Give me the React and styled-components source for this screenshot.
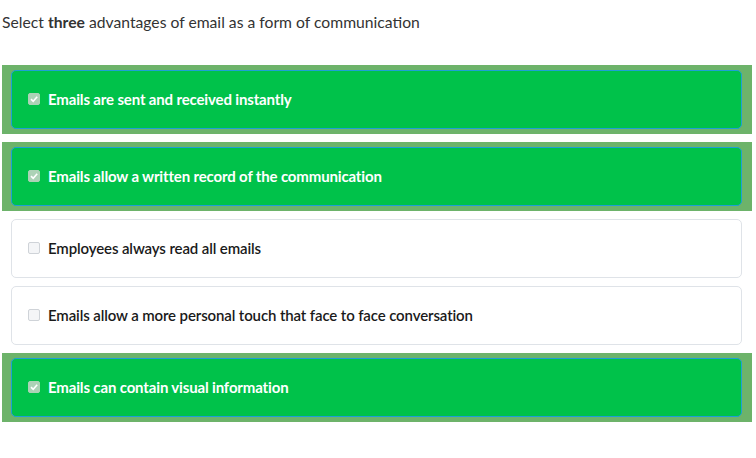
import React from "react";
import styled, { createGlobalStyle } from "styled-components";

const Global = createGlobalStyle`
  html, body { margin: 0; padding: 0; background: #ffffff; }
  body { font-family: Lato, "Open Sans", sans-serif; }
`;

const Page = styled.div`
  width: 756px;
  padding: 12px 4px 0 2px;
  box-sizing: border-box;
`;

const Question = styled.p`
  margin: 0 0 33px 0;
  font-size: 15.7px;
  line-height: 20px;
  color: #333333;
  b { font-weight: 700; color: #333333; }
`;

const List = styled.div`
  display: flex;
  flex-direction: column;
  gap: 8px;
`;

const Wrap = styled.div`
  padding: ${(p) => (p.$selected ? "5px 10px 5px 9px" : "0 10px 0 9px")};
  background: ${(p) => (p.$selected ? "#6db36a" : "transparent")};
`;

const Option = styled.label`
  display: flex;
  align-items: center;
  gap: 9px;
  height: 59px;
  box-sizing: border-box;
  padding: 0 0 0 16px;
  border-radius: 5px;
  border: 1px solid ${(p) => (p.$selected ? "#1e9fd6" : "#dfe3e8")};
  background: ${(p) => (p.$selected ? "#00c24a" : "#ffffff")};
  color: ${(p) => (p.$selected ? "#ffffff" : "#1a1a1a")};
  font-size: 15px;
  font-weight: ${(p) => (p.$selected ? 700 : 600)};
  letter-spacing: ${(p) => (p.$selected ? "-0.15px" : "-0.12px")};
  line-height: 18px;
`;

const Box = styled.span`
  width: 12px;
  height: 12px;
  box-sizing: border-box;
  border-radius: 2px;
  flex: none;
  margin-top: -2px;
  display: inline-flex;
  align-items: center;
  justify-content: center;
  border: 1px solid ${(p) => (p.$checked ? "#acd2b6" : "#cfd3d8")};
  background: ${(p) => (p.$checked ? "#acd2b6" : "#f4f5f7")};
`;

const Label = styled.span`
  margin-left: -1px;
  margin-top: -1px;
`;

const Check = () => (
  <svg width="10" height="10" viewBox="0 0 10 10">
    <path d="M2 5.2 L4.2 7.3 L8.2 2.8" fill="none" stroke="#ffffff" strokeWidth="1.6" />
  </svg>
);

const items = [
  { text: "Emails are sent and received instantly", selected: true },
  { text: "Emails allow a written record of the communication", selected: true },
  { text: "Employees always read all emails", selected: false },
  { text: "Emails allow a more personal touch that face to face conversation", selected: false },
  { text: "Emails can contain visual information", selected: true },
];

export default function App() {
  return (
    <>
      <Global />
      <Page>
        <Question>
          Select <b>three</b> advantages of email as a form of communication
        </Question>
        <List>
          {items.map((it) => (
            <Wrap key={it.text} $selected={it.selected}>
              <Option $selected={it.selected}>
                <Box $checked={it.selected}>{it.selected && <Check />}</Box>
                <Label>{it.text}</Label>
              </Option>
            </Wrap>
          ))}
        </List>
      </Page>
    </>
  );
}
